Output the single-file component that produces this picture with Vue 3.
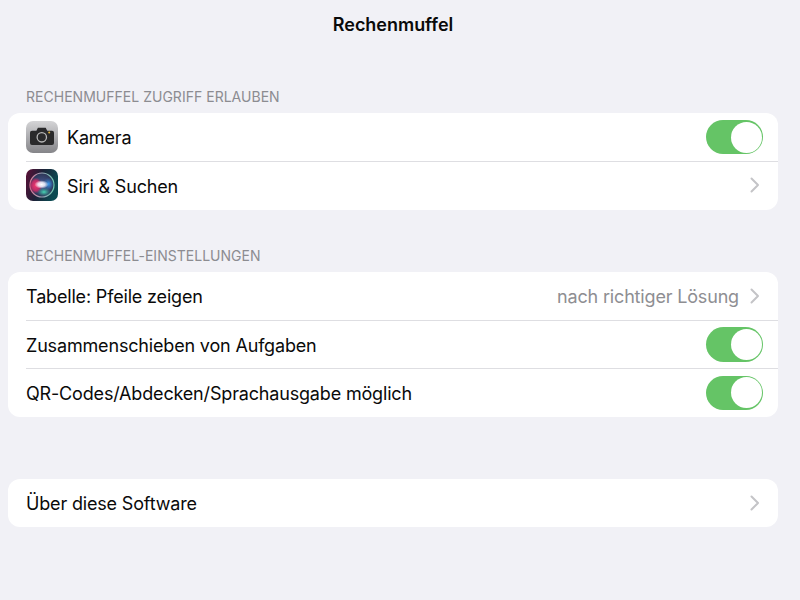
<script setup>
const sections = [
  {
    label: 'RECHENMUFFEL ZUGRIFF ERLAUBEN',
    rows: [
      { text: 'Kamera', icon: 'camera', toggle: true },
      { text: 'Siri & Suchen', icon: 'siri', chevron: true }
    ]
  },
  {
    label: 'RECHENMUFFEL-EINSTELLUNGEN',
    rows: [
      { text: 'Tabelle: Pfeile zeigen', value: 'nach richtiger Lösung', chevron: true },
      { text: 'Zusammenschieben von Aufgaben', toggle: true },
      { text: 'QR-Codes/Abdecken/Sprachausgabe möglich', toggle: true }
    ]
  },
  {
    rows: [{ text: 'Über diese Software', chevron: true }]
  }
]
</script>

<template>
  <div class="page">
    <header class="title">Rechenmuffel</header>
    <section v-for="(s, i) in sections" :key="i" class="section" :class="{ nolabel: !s.label }">
      <div v-if="s.label" class="label">{{ s.label }}</div>
      <div class="card">
        <div v-for="r in s.rows" :key="r.text" class="row">
          <svg v-if="r.icon === 'camera'" class="icon" viewBox="0 0 32 32">
            <defs>
              <linearGradient id="camBg" x1="0" y1="0" x2="0" y2="1">
                <stop offset="0" stop-color="#d4d4d6" />
                <stop offset="1" stop-color="#858589" />
              </linearGradient>
            </defs>
            <rect width="32" height="32" rx="7" fill="url(#camBg)" />
            <path d="M6 9.700h4.400l1.500-2.900h7.800l1.500 2.900H26a2 2 0 0 1 2 2v10.300a2 2 0 0 1-2 2H6a2 2 0 0 1-2-2V11.700a2 2 0 0 1 2-2z" fill="#2a2a2b" />
            <circle cx="15.800" cy="16.300" r="4.700" fill="none" stroke="#b8b8b8" stroke-width="1.300" />
            <circle cx="23.200" cy="11.500" r="1" fill="#e8b93c" />
          </svg>
          <svg v-else-if="r.icon === 'siri'" class="icon" viewBox="0 0 32 32">
            <defs>
              <linearGradient id="siriBg" x1="0" y1="0" x2="1" y2="0.300">
                <stop offset="0" stop-color="#5c0f36" />
                <stop offset="0.500" stop-color="#1d2238" />
                <stop offset="1" stop-color="#0c4a52" />
              </linearGradient>
              <linearGradient id="siriRing" x1="0" y1="0" x2="1" y2="0">
                <stop offset="0" stop-color="#d87a98" />
                <stop offset="0.500" stop-color="#9aa4b8" />
                <stop offset="1" stop-color="#6ec8b0" />
              </linearGradient>
              <radialGradient id="siriOrb">
                <stop offset="0" stop-color="#4a5c98" />
                <stop offset="1" stop-color="#2c3554" />
              </radialGradient>
              <radialGradient id="siriPink">
                <stop offset="0" stop-color="#f5386e" />
                <stop offset="0.650" stop-color="#d02a68" stop-opacity="0.850" />
                <stop offset="1" stop-color="#c02a60" stop-opacity="0" />
              </radialGradient>
              <radialGradient id="siriBlue">
                <stop offset="0" stop-color="#3f9cf0" />
                <stop offset="1" stop-color="#2a70c0" stop-opacity="0" />
              </radialGradient>
              <radialGradient id="siriGreen">
                <stop offset="0" stop-color="#48d8b4" />
                <stop offset="1" stop-color="#30a090" stop-opacity="0" />
              </radialGradient>
              <radialGradient id="siriWhite">
                <stop offset="0" stop-color="#ffffff" />
                <stop offset="0.500" stop-color="#f6f2ff" stop-opacity="0.850" />
                <stop offset="1" stop-color="#ffffff" stop-opacity="0" />
              </radialGradient>
            </defs>
            <rect width="32" height="32" rx="7" fill="url(#siriBg)" />
            <circle cx="16" cy="16" r="12" fill="url(#siriOrb)" stroke="url(#siriRing)" stroke-width="1.200" />
            <ellipse cx="9.800" cy="16.500" rx="6.500" ry="8" fill="url(#siriPink)" />
            <ellipse cx="22.500" cy="15" rx="5.500" ry="6.500" fill="url(#siriBlue)" />
            <ellipse cx="18" cy="23" rx="7" ry="4.500" fill="url(#siriGreen)" />
            <ellipse cx="15.500" cy="15.500" rx="7" ry="4.200" fill="url(#siriWhite)" />
          </svg>
          <span class="text">{{ r.text }}</span>
          <span v-if="r.value" class="value">{{ r.value }}</span>
          <span v-if="r.toggle" class="toggle"><span class="knob"></span></span>
          <svg v-if="r.chevron" class="chev" viewBox="0 0 10 16">
            <path d="M1.500 1.500 8 8l-6.500 6.500" fill="none" stroke="#c4c4c7" stroke-width="2" stroke-linecap="round" stroke-linejoin="round" />
          </svg>
        </div>
      </div>
    </section>
  </div>
</template>

<style scoped>
.page {
  width: 800px;
  height: 600px;
  box-sizing: border-box;
  background: #f1f1f6;
  font-family: Inter, "Liberation Sans", sans-serif;
  color: #0a0a0a;
  overflow: hidden;
  padding: 0 22px 0 8px;
}
.title {
  height: 48px;
  line-height: 49px;
  text-align: center;
  font-size: 18px;
  font-weight: 600;
  letter-spacing: -0.03px;
  margin-left: -8px;
  margin-right: -8px;
}
.section {
  margin-top: 40px;
}
.section + .section {
  margin-top: 37.330px;
}
.section.nolabel {
  margin-top: 62px;
}
.label {
  height: 25px;
  line-height: 18px;
  padding-left: 18px;
  font-size: 14px;
  letter-spacing: 0.02px;
  color: #8c8c91;
}
.card {
  background: #fff;
  border-radius: 12px;
  overflow: hidden;
}
.row {
  height: 48.330px;
  box-sizing: border-box;
  display: flex;
  align-items: center;
  padding: 0 15px 0 18px;
  position: relative;
}
.row + .row::before {
  content: "";
  position: absolute;
  left: 18px;
  right: 0;
  top: -0.5px;
  height: 1px;
  background: #dedee2;
}
.icon {
  width: 32px;
  height: 32px;
  margin-right: 9px;
  flex: none;
}
.text {
  flex: 1;
  font-size: 18px;
  letter-spacing: -0.17px;
  position: relative;
  top: 0.5px;
}
.row:nth-child(2) .text {
  top: 1px;
}
.value {
  font-size: 18px;
  letter-spacing: -0.17px;
  color: #8e8e92;
  margin-right: 11px;
  position: relative;
  top: 0.5px;
}
.chev {
  width: 10px;
  height: 16px;
  margin-right: 3px;
  flex: none;
}
.toggle {
  width: 57px;
  height: 34.500px;
  border-radius: 18px;
  background: #65c466;
  position: relative;
  flex: none;
}
.knob {
  position: absolute;
  right: 1.500px;
  top: 1.750px;
  width: 31px;
  height: 31px;
  border-radius: 50%;
  background: #fff;
}
</style>
